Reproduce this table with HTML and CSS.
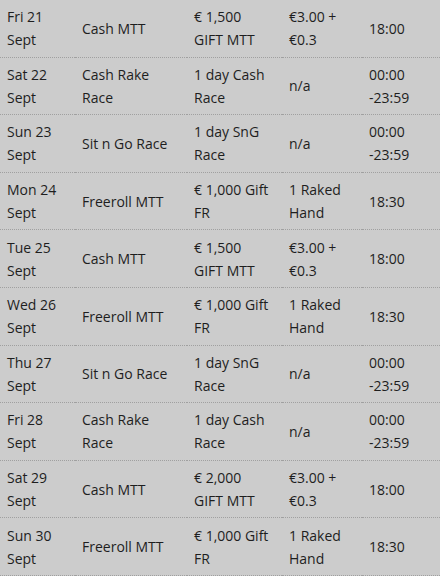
FILE: index.html
```html
<!DOCTYPE html>
<html>
<head>
<meta charset="utf-8">
<link rel="stylesheet" href="styles.css">
</head>
<body>
<table class="schedule">
  <colgroup>
    <col class="c-date"><col class="c-type"><col class="c-prize"><col class="c-buyin"><col class="c-time">
  </colgroup>
  <tbody>
    <tr><td>Fri 21<br>Sept</td><td>Cash MTT</td><td>€ 1,500<br>GIFT MTT</td><td>€3.00 +<br>€0.3</td><td>18:00</td></tr>
    <tr><td>Sat 22<br>Sept</td><td>Cash Rake<br>Race</td><td>1 day Cash<br>Race</td><td>n/a</td><td>00:00<br>-23:59</td></tr>
    <tr><td>Sun 23<br>Sept</td><td>Sit n Go Race</td><td>1 day SnG<br>Race</td><td>n/a</td><td>00:00<br>-23:59</td></tr>
    <tr><td>Mon 24<br>Sept</td><td>Freeroll MTT</td><td>€ 1,000 Gift<br>FR</td><td>1 Raked<br>Hand</td><td>18:30</td></tr>
    <tr><td>Tue 25<br>Sept</td><td>Cash MTT</td><td>€ 1,500<br>GIFT MTT</td><td>€3.00 +<br>€0.3</td><td>18:00</td></tr>
    <tr><td>Wed 26<br>Sept</td><td>Freeroll MTT</td><td>€ 1,000 Gift<br>FR</td><td>1 Raked<br>Hand</td><td>18:30</td></tr>
    <tr><td>Thu 27<br>Sept</td><td>Sit n Go Race</td><td>1 day SnG<br>Race</td><td>n/a</td><td>00:00<br>-23:59</td></tr>
    <tr><td>Fri 28<br>Sept</td><td>Cash Rake<br>Race</td><td>1 day Cash<br>Race</td><td>n/a</td><td>00:00<br>-23:59</td></tr>
    <tr><td>Sat 29<br>Sept</td><td>Cash MTT</td><td>€ 2,000<br>GIFT MTT</td><td>€3.00 +<br>€0.3</td><td>18:00</td></tr>
    <tr><td>Sun 30<br>Sept</td><td>Freeroll MTT</td><td>€ 1,000 Gift<br>FR</td><td>1 Raked<br>Hand</td><td>18:30</td></tr>
  </tbody>
</table>
</body>
</html>
```

FILE: styles.css
```css
html, body {
  margin: 0;
  padding: 0;
  background: #cccccc;
}
.schedule {
  width: 440px;
  table-layout: fixed;
  border-collapse: collapse;
  font-family: "Open Sans", "Noto Sans", sans-serif;
  font-size: 14px;
  line-height: 23px;
  color: #1e1e1e;
}
.c-date { width: 75px; }
.c-type { width: 112px; }
.c-prize { width: 95px; }
.c-buyin { width: 80px; }
.c-time { width: 78px; }
.schedule td {
  padding: 5.3px 0 5.3px 7px;
  vertical-align: middle;
  border-bottom: 1px dotted #a0a0a0;
  white-space: nowrap;
  overflow: hidden;
}
```
